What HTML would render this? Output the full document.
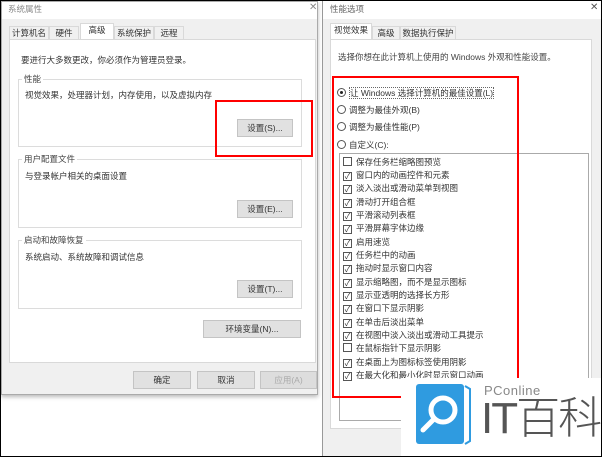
<!DOCTYPE html>
<html><head><meta charset="utf-8"><style>
*{margin:0;padding:0;box-sizing:border-box}
body{width:602px;height:457px;position:relative;overflow:hidden;background:#fff;font-family:"Liberation Sans","Noto Sans CJK SC",sans-serif;font-size:8.5px;color:#333}
.a{position:absolute}
.btn{position:absolute;background:#e1e1e1;border:1px solid #c4c4c4;text-align:center;line-height:16px;font-size:8.5px;color:#333}
.grp{position:absolute;border:1px solid #dcdcdc}
.lbl{position:absolute;background:#fff;padding:0 2px;font-size:8.5px;color:#444}
.tab{position:absolute;background:#f0f0f0;border:1px solid #d9d9d9;border-bottom:none;height:14px;line-height:13px;font-size:8.5px;text-align:center;color:#333}
.rad{position:absolute;left:337px;font-size:8.5px}
.rad i{display:inline-block;width:9px;height:9px;border:1px solid #555;border-radius:50%;vertical-align:-1px;margin-right:3px;position:relative}
.chk{position:absolute;left:343px;font-size:8.5px;height:13px;line-height:13px}
.chk i{display:inline-block;width:9px;height:9px;border:1px solid #555;vertical-align:-1px;margin-right:4px;position:relative;font-style:normal;font-size:8px;line-height:7px;text-align:center}
</style></head><body>
<div class="a" style="left:0;top:0;width:602px;height:457px;border:1px solid #000;z-index:20;pointer-events:none"></div>
<!-- left window -->
<div class="a" style="left:1px;top:1px;width:317px;height:394px;background:#f0f0f0;border:1px solid #aaa;box-shadow:0 2px 4px #bbb"></div>
<div class="a" style="left:2px;top:2px;width:315px;height:17px;background:#fff"></div>
<div class="a" style="left:8px;top:3px;color:#888">系统属性</div>
<div class="a" style="left:309px;top:2px;color:#888;font-size:10px">✕</div>
<div class="tab" style="left:9px;top:26px;width:40px">计算机名</div>
<div class="tab" style="left:49px;top:26px;width:30px">硬件</div>
<div class="tab" style="left:80px;top:23px;width:34px;height:17px;background:#fff">高级</div>
<div class="tab" style="left:114px;top:26px;width:40px">系统保护</div>
<div class="tab" style="left:154px;top:26px;width:30px">远程</div>
<div class="a" style="left:9px;top:39px;width:307px;height:324px;background:#fff;border:1px solid #d9d9d9"></div>
<div class="a" style="left:21px;top:54px">要进行大多数更改，你必须作为管理员登录。</div>
<div class="grp" style="left:18px;top:79px;width:284px;height:68px"></div>
<div class="lbl" style="left:22px;top:73px">性能</div>
<div class="a" style="left:25px;top:89px">视觉效果，处理器计划，内存使用，以及虚拟内存</div>
<div class="btn" style="left:237px;top:119px;width:56px;height:18px">设置(S)...</div>
<div class="a" style="left:215px;top:100px;width:98px;height:57px;border:2px solid #f00"></div>
<div class="grp" style="left:18px;top:159px;width:284px;height:69px"></div>
<div class="lbl" style="left:22px;top:153px">用户配置文件</div>
<div class="a" style="left:25px;top:170px">与登录帐户相关的桌面设置</div>
<div class="btn" style="left:237px;top:200px;width:56px;height:18px">设置(E)...</div>
<div class="grp" style="left:18px;top:240px;width:284px;height:69px"></div>
<div class="lbl" style="left:22px;top:234px">启动和故障恢复</div>
<div class="a" style="left:25px;top:251px">系统启动、系统故障和调试信息</div>
<div class="btn" style="left:237px;top:280px;width:56px;height:18px">设置(T)...</div>
<div class="btn" style="left:203px;top:320px;width:98px;height:18px">环境变量(N)...</div>
<div class="btn" style="left:133px;top:371px;width:58px;height:18px">确定</div>
<div class="btn" style="left:197px;top:371px;width:58px;height:18px">取消</div>
<div class="btn" style="left:260px;top:371px;width:57px;height:18px;color:#aaa;background:#ddd">应用(A)</div>
<!-- right window -->
<div class="a" style="left:322px;top:1px;width:280px;height:456px;background:#f0f0f0;border-left:1px solid #999"></div>
<div class="a" style="left:323px;top:1px;width:279px;height:18px;background:#fff"></div>
<div class="a" style="left:330px;top:3px;color:#666">性能选项</div>
<div class="a" style="left:590px;top:2px;color:#555;font-size:10px">✕</div>
<div class="tab" style="left:330px;top:23px;width:42px;height:17px;background:#fff">视觉效果</div>
<div class="tab" style="left:372px;top:26px;width:28px">高级</div>
<div class="tab" style="left:400px;top:26px;width:56px">数据执行保护</div>
<div class="a" style="left:330px;top:39px;width:262px;height:390px;background:#fff;border:1px solid #d9d9d9"></div>
<div class="a" style="left:338px;top:51px;color:#444">选择你想在此计算机上使用的 Windows 外观和性能设置。</div>
<div class="rad" style="top:87px"><i><b style="position:absolute;left:2px;top:2px;width:3px;height:3px;background:#222;border-radius:50%"></b></i><span style="border:1px dotted #666">让 Windows 选择计算机的最佳设置(L)</span></div>
<div class="rad" style="top:104px"><i></i>调整为最佳外观(B)</div>
<div class="rad" style="top:121px"><i></i>调整为最佳性能(P)</div>
<div class="rad" style="top:139px"><i></i>自定义(C):</div>
<div class="a" style="left:339px;top:153px;width:250px;height:268px;border:1px solid #aaa;background:#fff"></div>
<div class="chk" style="top:156px"><i></i>保存任务栏缩略图预览</div>
<div class="chk" style="top:169px"><i>✓</i>窗口内的动画控件和元素</div>
<div class="chk" style="top:182px"><i>✓</i>淡入淡出或滑动菜单到视图</div>
<div class="chk" style="top:196px"><i>✓</i>滑动打开组合框</div>
<div class="chk" style="top:209px"><i>✓</i>平滑滚动列表框</div>
<div class="chk" style="top:222px"><i>✓</i>平滑屏幕字体边缘</div>
<div class="chk" style="top:236px"><i>✓</i>启用速览</div>
<div class="chk" style="top:249px"><i>✓</i>任务栏中的动画</div>
<div class="chk" style="top:262px"><i>✓</i>拖动时显示窗口内容</div>
<div class="chk" style="top:276px"><i>✓</i>显示缩略图，而不是显示图标</div>
<div class="chk" style="top:289px"><i>✓</i>显示亚透明的选择长方形</div>
<div class="chk" style="top:302px"><i>✓</i>在窗口下显示阴影</div>
<div class="chk" style="top:316px"><i>✓</i>在单击后淡出菜单</div>
<div class="chk" style="top:329px"><i>✓</i>在视图中淡入淡出或滑动工具提示</div>
<div class="chk" style="top:342px"><i></i>在鼠标指针下显示阴影</div>
<div class="chk" style="top:356px"><i>✓</i>在桌面上为图标标签使用阴影</div>
<div class="chk" style="top:369px"><i>✓</i>在最大化和最小化时显示窗口动画</div>
<div class="a" style="left:332px;top:76px;width:187px;height:322px;border:2px solid #f00"></div>
<!-- logo -->
<div class="a" style="left:401px;top:378px;width:201px;height:78px;background:#fff;z-index:5"></div>
<svg class="a" style="left:416px;top:384px;z-index:6" width="56" height="62" viewBox="0 0 56 62">
<rect x="0" y="0" width="48" height="60" rx="3" fill="#2f9be0"/>
<path d="M49 2 L54 5 L54 57 L49 60" fill="none" stroke="#2f9be0" stroke-width="2"/>
<circle cx="27" cy="26" r="12" fill="none" stroke="#fff" stroke-width="5"/>
<path d="M18 35 L7 46" stroke="#fff" stroke-width="5" stroke-linecap="round"/>
</svg>
<div class="a" style="left:484px;top:383px;z-index:6;font-size:13px;color:#888;letter-spacing:0.5px">PConline</div>
<div class="a" style="left:481px;top:394px;z-index:6;font-size:44px;line-height:50px;color:#555;font-weight:300;letter-spacing:-2px">IT百科</div>
</body></html>
